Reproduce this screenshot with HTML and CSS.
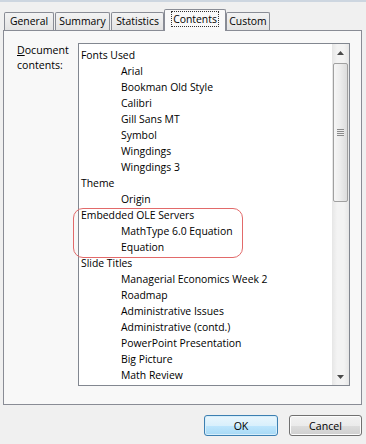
FILE: index.html
```html
<!DOCTYPE html>
<html lang="en">
<head>
    <meta charset="UTF-8">
    <title>Properties</title>
    <link rel="stylesheet" href="styles.css">
</head>
<body>

    <div class="frame-top"></div>

    <div class="tabs">
        <div class="tab tab-general">General</div>
        <div class="tab tab-summary">Summary</div>
        <div class="tab tab-statistics">Statistics</div>
        <div class="tab tab-contents active"><span class="focus">Contents</span></div>
        <div class="tab tab-custom">Custom</div>
    </div>

    <div class="panel">
        <div class="field-label"><u>D</u>ocument<br>contents:</div>

        <div class="listbox">
            <div class="list">
                <div class="row">Fonts Used</div>
                <div class="row sub">Arial</div>
                <div class="row sub">Bookman Old Style</div>
                <div class="row sub">Calibri</div>
                <div class="row sub">Gill Sans MT</div>
                <div class="row sub">Symbol</div>
                <div class="row sub">Wingdings</div>
                <div class="row sub">Wingdings 3</div>
                <div class="row">Theme</div>
                <div class="row sub">Origin</div>
                <div class="row">Embedded OLE Servers</div>
                <div class="row sub">MathType 6.0 Equation</div>
                <div class="row sub">Equation</div>
                <div class="row">Slide Titles</div>
                <div class="row sub">Managerial Economics Week 2</div>
                <div class="row sub">Roadmap</div>
                <div class="row sub">Administrative Issues</div>
                <div class="row sub">Administrative (contd.)</div>
                <div class="row sub">PowerPoint Presentation</div>
                <div class="row sub">Big Picture</div>
                <div class="row sub">Math Review</div>
            </div>

            <div class="scrollbar">
                <div class="arrow">
                    <svg width="7" height="4" viewBox="0 0 7 4"><path d="M3.5 0 L7 4 L0 4 Z" fill="#4a4a4a"/></svg>
                </div>
                <div class="thumb">
                    <div class="grip"></div>
                </div>
                <div class="track-rest"></div>
                <div class="arrow">
                    <svg width="7" height="4" viewBox="0 0 7 4"><path d="M0 0 L7 0 L3.5 4 Z" fill="#4a4a4a"/></svg>
                </div>
            </div>

            <!-- annotation drawn over the list -->
            <div class="highlight"></div>
        </div>
    </div>

    <div class="footer">
        <button class="btn default">OK</button>
        <button class="btn">Cancel</button>
    </div>

</body>
</html>
```

FILE: styles.css
```css
body {
    margin: 0;
    background-color: #f0f0f0;
    font-family: "Open Sans", "Liberation Sans", sans-serif;
    font-size: 10.4px;
    color: #000;
}
.frame-top {
    height: 2px;
    background-color: #cdd6e0;
}
.tabs {
    display: flex;
    align-items: flex-end;
    height: 21px;
    margin: 7px 0 0 4px;
    position: relative;
    z-index: 1;
}
.tab {
    box-sizing: border-box;
    height: 18px;
    padding: 0;
    margin-right: 1px;
    border: 1px solid #898c95;
    border-bottom: none;
    border-radius: 2px 2px 0 0;
    background: linear-gradient(#f3f3f3, #e3e3e3);
    line-height: 16px;
    text-align: center;
    white-space: nowrap;
}
.tab-general { width: 50px; }
.tab-summary { width: 55px; }
.tab-statistics { width: 53px; }
.tab-contents { width: 62px; }
.tab-custom { width: 44px; }
.tab.active {
    height: 22px;
    margin: 0 0 -1px -1px;
    background: #f9f9f9;
    line-height: 19px;
}
.focus {
    border: 1px dotted #333;
    padding: 0 1px;
}
.panel {
    box-sizing: border-box;
    display: flex;
    height: 375px;
    margin: 0 4px 0 3px;
    padding: 12px 0 0 13px;
    border: 1px solid #898c95;
    background-color: #f8f8f8;
}
.field-label {
    width: 61px;
    line-height: 15px;
    font-size: 10.6px;
}
.listbox {
    position: relative;
    display: flex;
    box-sizing: border-box;
    width: 272px;
    height: 343px;
    border: 1px solid #828790;
    background-color: #fff;
}
.list {
    flex: 1;
    padding: 3px 0 0 2px;
    overflow: hidden;
}
.row {
    height: 16px;
    line-height: 16px;
    white-space: nowrap;
}
.row.sub {
    padding-left: 40px;
}
.scrollbar {
    display: flex;
    flex-direction: column;
    width: 17px;
    background: linear-gradient(90deg, #e6e6e6, #f3f3f3 30%, #f3f3f3 70%, #e6e6e6);
}
.arrow {
    height: 17px;
    display: flex;
    align-items: center;
    justify-content: center;
}
.thumb {
    box-sizing: border-box;
    height: 139px;
    margin: 2px 0 0 1px;
    width: 15px;
    border: 1px solid #a0a0a0;
    border-radius: 2px;
    background: linear-gradient(90deg, #f6f6f6, #ececec 50%, #dcdcdc);
    display: flex;
    align-items: center;
    justify-content: center;
}
.grip {
    width: 7px;
    height: 7px;
    background: repeating-linear-gradient(#8a8a8a 0 1px, #eeeeee 1px 2px);
}
.track-rest {
    flex: 1;
}
.highlight {
    position: absolute;
    left: -6px;
    top: 164px;
    width: 170px;
    height: 50px;
    box-sizing: border-box;
    border: 1.5px solid #e26a6a;
    border-radius: 10px;
}
.footer {
    display: flex;
    justify-content: flex-end;
    gap: 11px;
    padding: 10px 4px 0 0;
}
.btn {
    box-sizing: border-box;
    height: 21px;
    font-family: "Open Sans", "Liberation Sans", sans-serif;
    font-size: 10.6px;
    color: #000;
    border: 1px solid #707070;
    border-radius: 3px;
    background: linear-gradient(#f2f2f2 0%, #ebebeb 50%, #dddddd 51%, #cfcfcf 100%);
    box-shadow: inset 0 0 0 1px #fcfcfc;
    padding: 0;
}
.btn.default {
    width: 74px;
    border-color: #3c7fb1;
    background: linear-gradient(#eaf6fd 0%, #d9f0fc 50%, #bee6fd 51%, #a7d9f5 100%);
    box-shadow: inset 0 0 0 1px #d6eefb;
}
.btn:not(.default) {
    width: 73px;
}
```
